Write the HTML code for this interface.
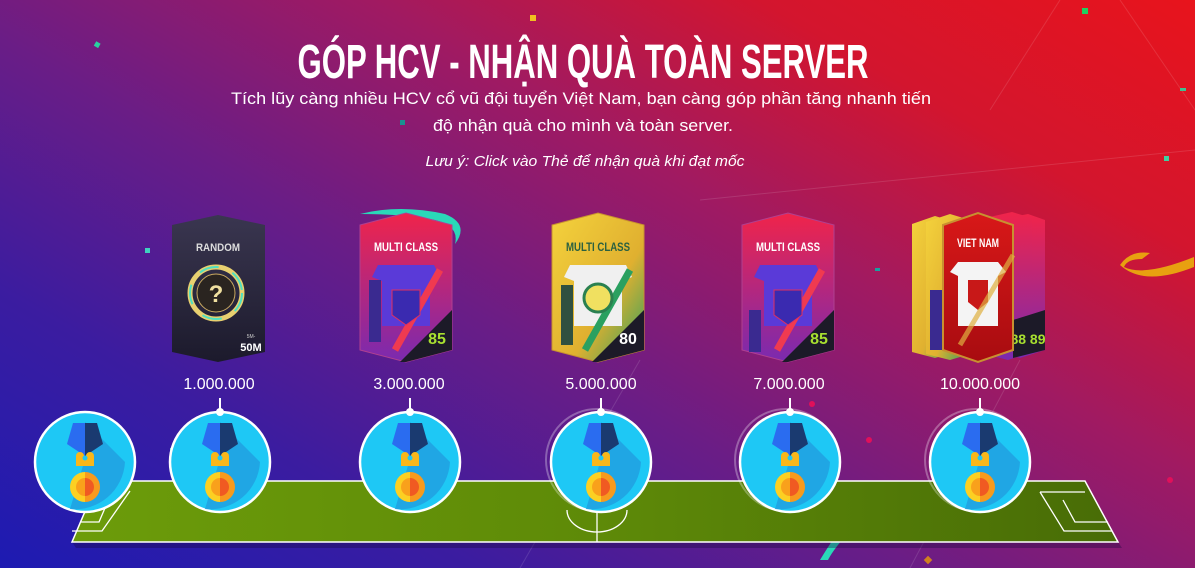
<!DOCTYPE html>
<html><head><meta charset="utf-8"><style>
html,body{margin:0;padding:0}
body{width:1195px;height:568px;overflow:hidden;position:relative;font-family:"Liberation Sans",sans-serif;
background:linear-gradient(30deg,#1d1bb2 0%,#3b1ca0 22%,#6a1d86 42%,#a01a62 62%,#d3152e 80%,#e8141c 100%);}
svg{position:absolute;left:0;top:0}
</style></head><body>
<svg width="1195" height="568" viewBox="0 0 1195 568" xmlns="http://www.w3.org/2000/svg">
<defs>
<g id="medal">
<circle r="50" fill="#1ec8f5" stroke="#fff" stroke-width="2.5"/>
<path d="M0,-40 L40,0 A50,50 0 0 1 -15,47 L0,-3Z" fill="#20a2e2" opacity="0.9"/>
<path d="M-12,-39 L0,-39 L0,-6 L-18,-18Z" fill="#2a6cf0"/>
<path d="M0,-39 L12,-39 L18,-18 L0,-6Z" fill="#1a3a70"/>
<path d="M-9,-6 a4,4 0 0 1 8,0 v4 h2 v-4 a4,4 0 0 1 8,0 v10 h-18z" fill="#f9b71a"/>
<circle cy="-4" r="2.5" fill="#1ec8f5"/>
<path d="M0,10 A15,15 0 0 0 0,40Z" fill="#fcd022"/>
<path d="M0,10 A15,15 0 0 1 0,40Z" fill="#f79a1e"/>
<path d="M0,16 A9,9 0 0 0 0,34Z" fill="#f9a11b"/>
<path d="M0,16 A9,9 0 0 1 0,34Z" fill="#f05a22"/>
</g>
<linearGradient id="mc" x1="0" y1="0" x2="0" y2="1"><stop offset="0" stop-color="#f0244a"/><stop offset="1" stop-color="#7a2ab0"/></linearGradient>
<linearGradient id="gc" x1="0" y1="0" x2="1" y2="1"><stop offset="0" stop-color="#f4d23c"/><stop offset="0.6" stop-color="#e0b030"/><stop offset="1" stop-color="#2aa060"/></linearGradient>
<linearGradient id="rc" x1="0" y1="0" x2="0" y2="1"><stop offset="0" stop-color="#3a3650"/><stop offset="1" stop-color="#1c1a2c"/></linearGradient>
<linearGradient id="vn" x1="0" y1="0" x2="0" y2="1"><stop offset="0" stop-color="#d81818"/><stop offset="1" stop-color="#a80c10"/></linearGradient>
<linearGradient id="fld" x1="0" y1="0" x2="1" y2="0"><stop offset="0" stop-color="#6c9c0a"/><stop offset="0.5" stop-color="#5e8a08"/><stop offset="1" stop-color="#486c06"/></linearGradient>
</defs>
<g stroke="#ffffff" stroke-opacity="0.12" fill="none">
<line x1="1060" y1="0" x2="990" y2="110"/><line x1="1120" y1="0" x2="1195" y2="110"/>
<line x1="520" y1="568" x2="640" y2="360"/><line x1="910" y1="568" x2="1020" y2="360"/>
<line x1="700" y1="200" x2="1195" y2="150"/>
</g>
<g>
<rect x="95" y="42" width="5" height="5" fill="#2ad0a0" transform="rotate(30 97 44)"/>
<rect x="400" y="120" width="5" height="5" fill="#1a9090"/>
<rect x="530" y="15" width="6" height="6" fill="#f0c020"/>
<rect x="1082" y="8" width="6" height="6" fill="#20d060"/>
<rect x="1164" y="156" width="5" height="5" fill="#40d0a0"/>
<rect x="1180" y="88" width="6" height="3" fill="#40c090"/>
<rect x="145" y="248" width="5" height="5" fill="#40d0c0"/>
<rect x="170" y="448" width="5" height="5" fill="#40d0c0"/>
<rect x="875" y="268" width="5" height="3" fill="#18a0a0"/>
<circle cx="812" cy="404" r="3" fill="#e0105a"/><circle cx="869" cy="440" r="3" fill="#e0105a"/><circle cx="1170" cy="480" r="3" fill="#e0105a"/>
<rect x="925" y="557" width="6" height="6" fill="#d08020" transform="rotate(45 928 560)"/>
<path d="M1120,265 q10,-15 30,-12 l-8,6 q-15,0 -18,8 q20,10 70,-10 l0,10 q-50,20 -74,-2z" fill="#e8a010"/>
<path d="M360,214 q40,-10 85,0 q25,10 10,30 q5,-20 -25,-25 q-30,-5 -70,-5z" fill="#2ad8b8"/>
<path d="M820,560 q15,-25 25,-35 l-3,15 q-10,12 -14,20z" fill="#2ad8b8"/>
</g>
<text x="583" y="78" text-anchor="middle" textLength="571" lengthAdjust="spacingAndGlyphs" font-family="Liberation Sans" font-weight="bold" font-size="48" fill="#fff">GÓP HCV - NHẬN QUÀ TOÀN SERVER</text>
<text x="581" y="104" text-anchor="middle" textLength="700" lengthAdjust="spacingAndGlyphs" font-family="Liberation Sans" font-size="17" fill="#fff">Tích lũy càng nhiều HCV cổ vũ đội tuyển Việt Nam, bạn càng góp phần tăng nhanh tiến</text>
<text x="583" y="131" text-anchor="middle" textLength="300" lengthAdjust="spacingAndGlyphs" font-family="Liberation Sans" font-size="17" fill="#fff">độ nhận quà cho mình và toàn server.</text>
<text x="585" y="166" text-anchor="middle" textLength="319" lengthAdjust="spacingAndGlyphs" font-family="Liberation Sans" font-style="italic" font-size="15" fill="#fff">Lưu ý: Click vào Thẻ để nhận quà khi đạt mốc</text>
<polygon points="76,548 1122,548 1118,542 72,542" fill="#1a0a40" opacity="0.35"/>
<polygon points="98,481 1085,481 1118,542 72,542" fill="url(#fld)" stroke="#fff" stroke-width="1.5"/>
<g stroke="#fff" stroke-width="1.3" fill="none">
<polyline points="130,491 102,531 72,531"/><polyline points="108,501 99,522 80,522"/>
<polyline points="1040,492 1085,492"/><polyline points="1040,492 1064,531 1112,531"/>
<polyline points="1063,500 1075,522 1108,522"/>
<line x1="597" y1="481" x2="597" y2="542"/><path d="M567,510 a30,22 0 0 0 60,0"/>
</g>
<g>
<polygon points="172,225 218,215 265,225 265,352 218,362 172,352" fill="url(#rc)"/>
<text x="218" y="251" text-anchor="middle" font-weight="bold" font-size="11" fill="#ddd" textLength="44" lengthAdjust="spacingAndGlyphs">RANDOM</text>
<circle cx="216" cy="293" r="26" fill="none" stroke="#e8d070" stroke-width="5"/>
<circle cx="216" cy="293" r="26" fill="none" stroke="#50e0c0" stroke-width="2" stroke-dasharray="20 15"/>
<circle cx="216" cy="293" r="19" fill="#2a2420" stroke="#c8a860" stroke-width="1"/>
<text x="216" y="302" text-anchor="middle" font-weight="bold" font-size="24" fill="#f0e0a0">?</text>
<text x="251" y="351" text-anchor="middle" font-weight="bold" font-size="11" fill="#fff">50M</text>
<text x="251" y="338" text-anchor="middle" font-size="5" fill="#ccc">5M-</text>
</g>
<g>
<polygon points="360,225 406,213 452,225 452,350 406,362 360,350" fill="url(#mc)" stroke="#b04090" stroke-width="1"/>
<text x="406" y="251" text-anchor="middle" font-weight="bold" font-size="12" fill="#fff" textLength="64" lengthAdjust="spacingAndGlyphs">MULTI CLASS</text>
<path d="M378,265 h56 l6,12 -10,4 v45 h-48 v-45 l-10,-4z" fill="#5a3ad8"/>
<line x1="440" y1="270" x2="395" y2="350" stroke="#f03a50" stroke-width="7"/>
<path d="M392,290 h28 v25 l-14,10 -14,-10z" fill="#3a2ab0" stroke="#e03060"/>
<polygon points="452,310 452,350 406,362 400,362" fill="#1c1a28"/>
<text x="437" y="344" text-anchor="middle" font-weight="bold" font-size="16" fill="#a8e030">85</text>
<rect x="369" y="280" width="12" height="62" fill="#3a2a90"/>
</g>
<g>
<polygon points="552,225 598,213 644,225 644,350 598,362 552,350" fill="url(#gc)" stroke="#c89030" stroke-width="1"/>
<text x="598" y="251" text-anchor="middle" font-weight="bold" font-size="12" fill="#2a6040" textLength="64" lengthAdjust="spacingAndGlyphs">MULTI CLASS</text>
<path d="M570,265 h56 l6,12 -10,4 v45 h-48 v-45 l-10,-4z" fill="#f0f0f0"/>
<line x1="630" y1="270" x2="585" y2="350" stroke="#2aa060" stroke-width="7"/>
<circle cx="598" cy="298" r="14" fill="#f0e060" stroke="#2a8050" stroke-width="3"/>
<polygon points="644,310 644,350 598,362 592,362" fill="#1c1a28"/>
<text x="628" y="344" text-anchor="middle" font-weight="bold" font-size="16" fill="#fff">80</text>
<rect x="561" y="285" width="12" height="60" fill="#305040"/>
</g>
<g>
<polygon points="742,225 788,213 834,225 834,350 788,362 742,350" fill="url(#mc)" stroke="#b04090" stroke-width="1"/>
<text x="788" y="251" text-anchor="middle" font-weight="bold" font-size="12" fill="#fff" textLength="64" lengthAdjust="spacingAndGlyphs">MULTI CLASS</text>
<path d="M760,265 h56 l6,12 -10,4 v45 h-48 v-45 l-10,-4z" fill="#5a3ad8"/>
<line x1="822" y1="270" x2="777" y2="350" stroke="#f03a50" stroke-width="7"/>
<path d="M774,290 h28 v25 l-14,10 -14,-10z" fill="#3a2ab0" stroke="#e03060"/>
<polygon points="834,310 834,350 788,362 782,362" fill="#1c1a28"/>
<text x="819" y="344" text-anchor="middle" font-weight="bold" font-size="16" fill="#a8e030">85</text>
<rect x="749" y="310" width="12" height="42" fill="#3a2a90"/>
</g>
<g>
<polygon points="998,220 1028,214 1045,220 1045,350 1020,358 998,352" fill="url(#mc)"/>
<polygon points="985,218 1012,212 1032,218 1032,352 1008,360 985,354" fill="url(#mc)"/>
<polygon points="1013,320 1045,310 1045,350 1013,358" fill="#1c1a28"/>
<text x="1028" y="344" text-anchor="middle" font-weight="bold" font-size="14" fill="#a8e030">88 89</text>
<polygon points="912,224 935,216 955,222 955,352 935,358 912,352" fill="url(#gc)"/>
<polygon points="926,222 950,214 970,220 970,354 950,360 926,354" fill="url(#gc)"/>
<rect x="930" y="290" width="12" height="60" fill="#3a2a90"/>
<polygon points="943,225 978,213 1013,225 1013,350 978,362 943,350" fill="url(#vn)" stroke="#c89030" stroke-width="2"/>
<text x="978" y="247" text-anchor="middle" font-weight="bold" font-size="12" fill="#fff" textLength="42" lengthAdjust="spacingAndGlyphs">VIET NAM</text>
<path d="M958,262 h40 l8,10 -8,4 v50 h-40 v-50 l-8,-4z" fill="#f4f4f4"/>
<path d="M968,280 h20 v22 l-10,8 -10,-8z" fill="#c81818"/>
<line x1="1013" y1="255" x2="960" y2="345" stroke="#e0b040" stroke-width="5" opacity="0.7"/>
</g>
<g font-size="16" fill="#fff" text-anchor="middle">
<text x="219" y="389">1.000.000</text><text x="409" y="389">3.000.000</text><text x="601" y="389">5.000.000</text><text x="789" y="389">7.000.000</text><text x="980" y="389">10.000.000</text>
</g>
<g stroke="#fff" stroke-width="2">
<line x1="220" y1="398" x2="220" y2="412"/><line x1="410" y1="398" x2="410" y2="412"/><line x1="601" y1="398" x2="601" y2="412"/><line x1="790" y1="398" x2="790" y2="412"/><line x1="980" y1="398" x2="980" y2="412"/>
</g>
<g fill="none" stroke="#fff" stroke-opacity="0.3" stroke-width="2">
<circle cx="597" cy="460" r="51"/><circle cx="786" cy="460" r="51"/><circle cx="976" cy="460" r="51"/>
</g>
<use href="#medal" x="85" y="462"/>
<use href="#medal" x="220" y="462"/>
<use href="#medal" x="410" y="462"/>
<use href="#medal" x="601" y="462"/>
<use href="#medal" x="790" y="462"/>
<use href="#medal" x="980" y="462"/>
<g fill="#fff"><circle cx="220" cy="412" r="4"/><circle cx="410" cy="412" r="4"/><circle cx="601" cy="412" r="4"/><circle cx="790" cy="412" r="4"/><circle cx="980" cy="412" r="4"/></g>
</svg>
</body></html>
